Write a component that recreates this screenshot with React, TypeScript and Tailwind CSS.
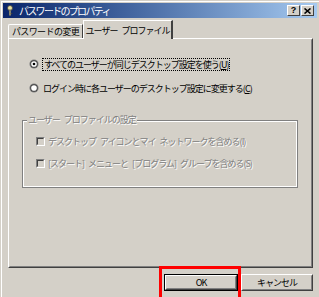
import React from 'react';

const Radio: React.FC<{ checked?: boolean }> = ({ checked }) => (
  <svg width="10" height="10" viewBox="0 0 12 12" className="shrink-0">
    <circle cx="6" cy="6" r="5.5" fill="#808080" />
    <path d="M1.6 9.4 A5.5 5.5 0 0 0 10.4 2.6 A5.5 5.5 0 0 1 1.6 9.4Z" fill="#ffffff" />
    <circle cx="6" cy="6" r="4.4" fill="#404040" />
    <path d="M2.6 9.4 A4.4 4.4 0 0 0 9.6 2.6 A4.4 4.4 0 0 1 2.6 9.4Z" fill="#d4d0c8" />
    <circle cx="6" cy="6" r="3.4" fill="#ffffff" />
    {checked && <circle cx="6" cy="6" r="1.6" fill="#000000" />}
  </svg>
);

const Check: React.FC = () => (
  <div className="w-[9px] h-[9px] shrink-0 border border-t-[#808080] border-l-[#808080] border-r-white border-b-white">
    <div className="w-full h-full border border-t-[#404040] border-l-[#404040] border-r-[#d4d0c8] border-b-[#d4d0c8] bg-[#d4d0c8]" />
  </div>
);

const WinButton: React.FC<{ children: React.ReactNode; isDefault?: boolean; className?: string }> = ({ children, isDefault, className }) => (
  <div className={`h-[17px] flex ${isDefault ? 'border border-black' : ''} ${className ?? ''}`}>
    <div className="flex-1 flex border border-t-white border-l-white border-r-[#404040] border-b-[#404040]">
      <div className="flex-1 flex items-center justify-center border border-t-[#d4d0c8] border-l-[#d4d0c8] border-r-[#808080] border-b-[#808080] text-[9px] leading-none text-black whitespace-nowrap">
        {children}
      </div>
    </div>
  </div>
);

const disabledText = 'text-[#808080] [text-shadow:1px_1px_0_#ffffff]';

export default function App() {
  return (
    <div className="w-[319px] h-[297px] overflow-hidden bg-[#d4d0c8] font-['Noto_Sans_CJK_JP',sans-serif] tracking-[-1px] [word-spacing:3px] text-black relative whitespace-nowrap">
      <div className="h-full border-l border-t border-l-[#d4d0c8] border-t-[#d4d0c8]">
        <div className="h-full border-l border-t border-l-white border-t-white pl-[1px] pt-[1px] pr-[2px]">
          {/* title bar */}
          <div className="h-[15px] flex items-center bg-gradient-to-r from-[#0a246a] to-[#a6caf0] pl-[3px] pr-[3px]">
            <svg width="8" height="11" viewBox="0 0 8 11" className="shrink-0">
              <circle cx="4" cy="3" r="2.5" fill="#e8e0a0" stroke="#404040" strokeWidth="0.8" />
              <rect x="3.2" y="5" width="1.6" height="5.5" fill="#e8e0a0" stroke="#404040" strokeWidth="0.5" />
              <rect x="4.8" y="8" width="1.5" height="1" fill="#404040" />
            </svg>
            <span className="ml-[5px] text-[10px] leading-none text-white tracking-[-1.7px]">パスワードのプロパティ</span>
            <div className="ml-auto flex gap-[1px]">
              <div className="w-[13px] h-[11px] bg-[#d4d0c8] border border-t-white border-l-white border-r-[#404040] border-b-[#404040] flex items-center justify-center text-[9px] font-bold leading-none tracking-normal font-['Liberation_Sans',sans-serif]">?</div>
              <div className="w-[13px] h-[11px] bg-[#d4d0c8] border border-t-white border-l-white border-r-[#404040] border-b-[#404040] flex items-center justify-center">
                <svg width="7" height="6" viewBox="0 0 7 6">
                  <path d="M0.5 0.5 L6.5 5.5 M6.5 0.5 L0.5 5.5" stroke="#000" strokeWidth="1.6" />
                </svg>
              </div>
            </div>
          </div>

          {/* tabs */}
          <div className="pl-[5px] pr-[4px] mt-[2px]">
            <div className="flex items-end h-[18px]">
              <div className="w-[75px] h-[14px] flex items-center justify-center border-l border-t border-l-white border-t-white border-r border-r-[#404040] rounded-tl-[2px] text-[9px] leading-none tracking-[-0.6px]">
                パスワードの変更
              </div>
              <div className="w-[90px] h-[19px] -mb-[1px] relative z-10 bg-[#d4d0c8] flex items-center justify-center border-l border-t border-l-white border-t-white border-r-2 border-r-[#404040] text-[9px] leading-none">
                ユーザー プロファイル
              </div>
            </div>

            {/* panel */}
            <div className="h-[230px] border border-t-white border-l-white border-r-[#404040] border-b-[#404040]">
              <div className="h-full border border-t-[#d4d0c8] border-l-[#d4d0c8] border-r-[#808080] border-b-[#808080] pt-[18px] pl-[19px] pr-[13px]">
                <div className="flex items-center h-[12px] gap-[3px]">
                  <Radio checked />
                  <span className="text-[9px] leading-none border border-dotted border-black px-[1px] py-[1px]">すべてのユーザーが同じデスクトップ設定を使う(<span className="underline">U</span>)</span>
                </div>
                <div className="flex items-center h-[12px] gap-[4px] mt-[12px]">
                  <Radio />
                  <span className="text-[9px] leading-none">ログイン時に各ユーザーのデスクトップ設定に変更する(<span className="underline">C</span>)</span>
                </div>

                {/* group box */}
                <div className="relative mt-[26px] -ml-[7px] border border-[#808080]">
                  <div className="border border-white h-[66px] pt-[13px] pl-[12px]">
                    <div className="flex items-center h-[12px] gap-[3px]">
                      <Check />
                      <span className={`text-[9px] leading-none ${disabledText}`}>デスクトップ アイコンとマイ ネットワークを含める(I)</span>
                    </div>
                    <div className="flex items-center h-[12px] gap-[3px] mt-[10px]">
                      <Check />
                      <span className={`text-[9px] leading-none ${disabledText}`}>[スタート] メニューと [プログラム] グループを含める(S)</span>
                    </div>
                  </div>
                  <span className={`absolute -top-[7px] left-[4px] px-[1px] bg-[#d4d0c8] text-[9px] leading-[12px] ${disabledText}`}>ユーザー プロファイルの設定</span>
                </div>
              </div>
            </div>

            {/* buttons */}
            <div className="flex justify-end gap-[3px] mt-[6px]">
              <WinButton isDefault className="w-[74px]">OK</WinButton>
              <WinButton className="w-[72px]">キャンセル</WinButton>
            </div>
          </div>
        </div>
      </div>
      {/* highlight box drawn over the OK button */}
      <div className="absolute left-[159px] top-[266px] w-[82px] h-[34px] border-[3px] border-[#ff0000] pointer-events-none" />
    </div>
  );
}
